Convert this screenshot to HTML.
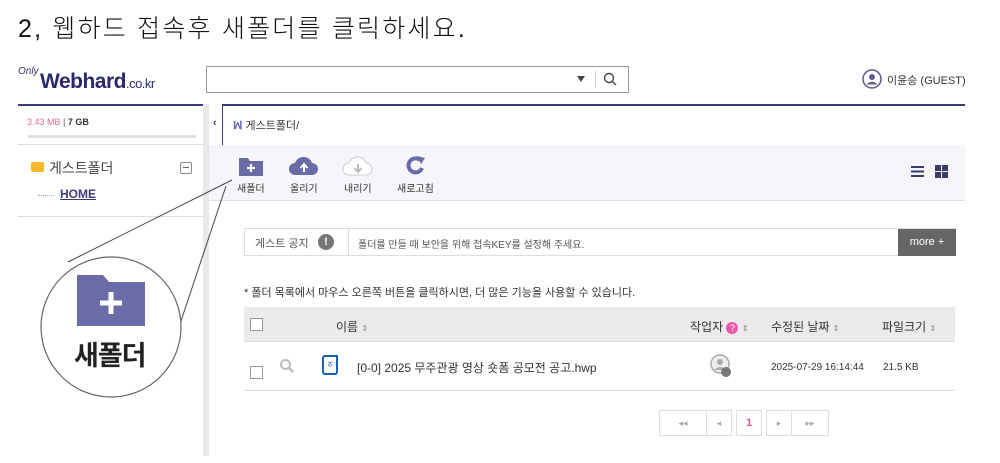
<!DOCTYPE html>
<html><head><meta charset="utf-8"><style>
*{margin:0;padding:0;box-sizing:border-box}
body{width:1000px;height:463px;background:#fff;font-family:"Liberation Sans","Noto Sans CJK KR",sans-serif;position:relative;overflow:hidden;color:#333}
.a{position:absolute}
.t{font-size:12px}
</style></head><body>
<div class="a" style="left:18px;top:9px;font-size:25px;font-family:'Liberation Sans','Noto Sans CJK KR',sans-serif;font-weight:300;color:#111;letter-spacing:2.2px">2, 웹하드 접속후 새폴더를 클릭하세요.</div>

<div class="a" style="left:18px;top:66px;font-size:10px;font-style:italic;color:#336">Only</div>
<div class="a" style="left:40px;top:70px;font-size:21px;font-weight:bold;color:#2a2a6a;letter-spacing:-0.5px">Webhard<span style="font-size:13px;font-weight:normal">.co.kr</span></div>

<div class="a" style="left:206px;top:66px;width:423px;height:27px;border:1px solid #999"></div>
<div class="a" style="left:577px;top:76px;width:0;height:0;border-left:4px solid transparent;border-right:4px solid transparent;border-top:6px solid #444"></div>
<div class="a" style="left:595px;top:71px;width:1px;height:17px;background:#ccc"></div>
<svg class="a" style="left:603px;top:72px" width="14" height="14"><circle cx="6" cy="6" r="4.5" fill="none" stroke="#444" stroke-width="1.4"/><line x1="9.5" y1="9.5" x2="13" y2="13" stroke="#444" stroke-width="1.4"/></svg>
<svg class="a" style="left:862px;top:69px" width="20" height="20"><circle cx="10" cy="10" r="9" fill="none" stroke="#5c5c8a" stroke-width="1.5"/><circle cx="10" cy="8" r="3" fill="#5c5c8a"/><path d="M4.5 15.5 Q10 10 15.5 15.5" fill="#5c5c8a"/></svg>
<div class="a t" style="left:887px;top:72px;color:#333;font-size:11px">이윤승 (GUEST)</div>

<div class="a" style="left:18px;top:104px;width:185px;height:2px;background:#3b3b7a"></div>
<div class="a" style="left:222px;top:104px;width:743px;height:2px;background:#3b3b7a"></div>
<div class="a" style="left:203px;top:104px;width:6px;height:352px;background:#e8e8e8"></div>

<div class="a" style="left:27px;top:117px;font-size:9px;color:#e86a9a">3.43 MB <span style="color:#555">|</span> <b style="color:#333">7 GB</b></div>
<div class="a" style="left:28px;top:135px;width:168px;height:3px;background:#e0e0e0"></div>
<div class="a" style="left:18px;top:144px;width:185px;height:1px;background:#ddd"></div>
<div class="a" style="left:31px;top:162px;width:13px;height:10px;background:#f5b82e;border-radius:2px"></div>
<div class="a" style="left:49px;top:158px;font-size:14px;color:#444">게스트폴더</div>
<div class="a" style="left:180px;top:162px;width:12px;height:12px;border:1px solid #888;border-radius:2px"></div>
<div class="a" style="left:183px;top:167px;width:6px;height:1px;background:#666"></div>
<div class="a" style="left:38px;top:195px;width:16px;border-top:1px dotted #aaa"></div>
<div class="a" style="left:60px;top:187px;font-size:12px;font-weight:bold;color:#3b3b7a;text-decoration:underline">HOME</div>
<div class="a" style="left:18px;top:216px;width:185px;height:1px;background:#ddd"></div>

<div class="a" style="left:209px;top:106px;width:14px;height:39px;border-right:1px solid #3b3b7a"></div>
<div class="a" style="left:213px;top:117px;font-size:11px;font-weight:bold;color:#3b3b7a">‹</div>
<div class="a" style="left:233px;top:117px;font-size:11px;color:#333"><b style="color:#6b6bb5">ꟽ</b> 게스트폴더/</div>
<div class="a" style="left:209px;top:145px;width:756px;height:56px;background:#f6f6fa;border-bottom:1px solid #ddd"></div>
<svg class="a" style="left:238px;top:155px" width="26" height="22"><path d="M1 3h9l2 3h13v15H1z" fill="#6b6ba8"/><path d="M13 9v8M9 13h8" stroke="#fff" stroke-width="2.2"/></svg>
<div class="a" style="left:237px;top:180px;font-size:10px;color:#333">새폴더</div>
<svg class="a" style="left:288px;top:155px" width="32" height="22"><path d="M7 20a6 6 0 0 1 0-12a9 9 0 0 1 17 0a6 6 0 0 1 0 12z" fill="#6b6ba8"/><path d="M16 17v-7M12.5 13l3.5-4 3.5 4" stroke="#fff" stroke-width="2" fill="none"/></svg>
<div class="a" style="left:290px;top:180px;font-size:10px;color:#333">올리기</div>
<svg class="a" style="left:342px;top:155px" width="32" height="22"><path d="M7 20a6 6 0 0 1 0-12a9 9 0 0 1 17 0a6 6 0 0 1 0 12z" fill="#fff" stroke="#ccc"/><path d="M16 9v7M12.5 13l3.5 4 3.5-4" stroke="#bbb" stroke-width="2" fill="none"/></svg>
<div class="a" style="left:344px;top:180px;font-size:10px;color:#333">내리기</div>
<svg class="a" style="left:405px;top:155px" width="22" height="22"><path d="M17 13a7 7 0 1 1-2-8" fill="none" stroke="#6b6ba8" stroke-width="4"/><path d="M12 1l8 2-4 6z" fill="#6b6ba8"/></svg>
<div class="a" style="left:397px;top:180px;font-size:10px;color:#333">새로고침</div>
<div class="a" style="left:911px;top:166px;width:13px;height:11px;background:repeating-linear-gradient(#3b3b6a 0 2px,transparent 2px 4.5px)"></div>
<div class="a" style="left:935px;top:165px;width:13px;height:13px;background:linear-gradient(90deg,transparent 6px,#f6f6fa 6px 7px,transparent 7px),linear-gradient(transparent 6px,#f6f6fa 6px 7px,transparent 7px),#3b3b6a"></div>

<div class="a" style="left:244px;top:228px;width:712px;height:28px;border:1px solid #ddd"></div>
<div class="a" style="left:348px;top:229px;width:1px;height:26px;background:#ddd"></div>
<div class="a" style="left:255px;top:235px;font-size:11px;color:#555">게스트 공지</div>
<div class="a" style="left:318px;top:234px;width:16px;height:16px;border-radius:50%;background:#777;color:#fff;font-size:11px;font-weight:bold;text-align:center;line-height:16px">!</div>
<div class="a" style="left:358px;top:236px;font-size:10px;color:#555">폴더를 만들 때 보안을 위해 접속KEY를 설정해 주세요.</div>
<div class="a" style="left:898px;top:229px;width:58px;height:27px;background:#666;color:#fff;font-size:11px;line-height:27px;text-align:center">more +</div>

<div class="a" style="left:244px;top:284px;font-size:11px;color:#333">* 폴더 목록에서 마우스 오른쪽 버튼을 클릭하시면, 더 많은 기능을 사용할 수 있습니다.</div>
<div class="a" style="left:244px;top:307px;width:711px;height:35px;background:#ebebeb;border-bottom:1px solid #ddd"></div>
<div class="a" style="left:250px;top:318px;width:13px;height:13px;border:1px solid #999;background:#fff"></div>
<div class="a" style="left:336px;top:318px;font-size:12px;color:#333">이름 <span style="font-size:8px;color:#888">⇕</span></div>
<div class="a" style="left:690px;top:318px;font-size:12px;color:#333">작업자 <span style="display:inline-block;width:12px;height:12px;border-radius:50%;background:#e85aa8;color:#fff;font-size:9px;text-align:center;line-height:12px">?</span> <span style="font-size:8px;color:#888">⇕</span></div>
<div class="a" style="left:771px;top:318px;font-size:12px;color:#333">수정된 날짜 <span style="font-size:8px;color:#888">⇕</span></div>
<div class="a" style="left:882px;top:318px;font-size:12px;color:#333">파일크기 <span style="font-size:8px;color:#888">⇕</span></div>
<div class="a" style="left:250px;top:366px;width:13px;height:13px;border:1px solid #999"></div>
<svg class="a" style="left:279px;top:358px" width="16" height="16"><circle cx="6.5" cy="6.5" r="4.5" fill="none" stroke="#bbb" stroke-width="2"/><line x1="10" y1="10" x2="14" y2="14" stroke="#bbb" stroke-width="2.5"/></svg>
<div class="a" style="left:322px;top:355px;width:16px;height:20px;border:2px solid #1a5fb4;border-radius:3px 0 3px 3px;color:#1a5fb4;font-size:8px;text-align:center;line-height:16px">ㅎ</div>
<div class="a" style="left:357px;top:359px;font-size:12px;color:#333">[0-0] 2025 무주관광 영상 숏폼 공모전 공고.hwp</div>
<svg class="a" style="left:710px;top:354px" width="22" height="24"><circle cx="10" cy="10" r="9" fill="#eee" stroke="#aaa" stroke-width="1.5"/><circle cx="10" cy="8" r="3" fill="#aaa"/><path d="M4 16Q10 10 16 16" fill="#aaa"/><circle cx="16" cy="18" r="5" fill="#777"/></svg>
<div class="a" style="left:771px;top:362px;font-size:10px;color:#333">2025-07-29 16:14:44</div>
<div class="a" style="left:883px;top:362px;font-size:10px;color:#333">21.5 KB</div>
<div class="a" style="left:244px;top:390px;width:711px;height:1px;background:#ddd"></div>

<div class="a" style="left:659px;top:410px;width:48px;height:26px;border:1px solid #ddd;font-size:9px;color:#aaa;text-align:center;line-height:24px">◂◂</div>
<div class="a" style="left:706px;top:410px;width:26px;height:26px;border:1px solid #ddd;font-size:9px;color:#aaa;text-align:center;line-height:24px">◂</div>
<div class="a" style="left:736px;top:410px;width:26px;height:26px;border:1px solid #ddd;font-size:11px;font-weight:bold;color:#e85a8a;text-align:center;line-height:24px">1</div>
<div class="a" style="left:766px;top:410px;width:26px;height:26px;border:1px solid #ddd;font-size:9px;color:#aaa;text-align:center;line-height:24px">▸</div>
<div class="a" style="left:791px;top:410px;width:38px;height:26px;border:1px solid #ddd;font-size:9px;color:#aaa;text-align:center;line-height:24px">▸▸</div>

<svg class="a" style="left:0;top:0" width="1000" height="463"><line x1="68" y1="262" x2="232" y2="180" stroke="#444" stroke-width="1"/><line x1="176" y1="336" x2="226" y2="186" stroke="#444" stroke-width="1"/><circle cx="111" cy="327" r="70" fill="#fff" stroke="#666" stroke-width="1.2"/><path d="M77 275h26l6 7h36v44H77z" fill="#6b6ba8"/><path d="M111 292v22M100 303h22" stroke="#fff" stroke-width="5"/></svg>
<div class="a" style="left:74px;top:334px;font-size:27px;font-weight:bold;color:#222;letter-spacing:-1px">새폴더</div>
</body></html>
